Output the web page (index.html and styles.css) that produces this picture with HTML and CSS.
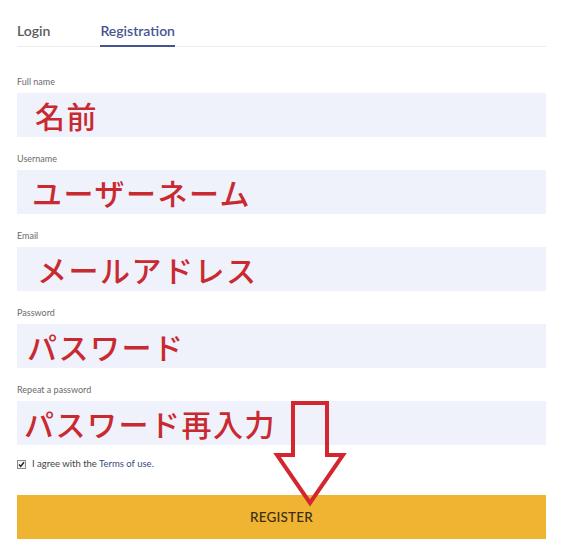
FILE: index.html
```html
<!DOCTYPE html>
<html lang="ja">
<head>
<meta charset="utf-8">
<link rel="stylesheet" href="styles.css">
</head>
<body>
<div class="page">
  <div class="tabs">
    <div class="tab">Login</div>
    <div class="tab active">Registration</div>
  </div>
  <form class="form">
    <div class="field">
      <label class="label">Full name</label>
      <div class="box"><span class="jp pad-name">名前</span></div>
    </div>
    <div class="field">
      <label class="label">Username</label>
      <div class="box"><span class="jp pad-user">ユーザーネーム</span></div>
    </div>
    <div class="field">
      <label class="label">Email</label>
      <div class="box"><span class="jp pad-email">メールアドレス</span></div>
    </div>
    <div class="field">
      <label class="label">Password</label>
      <div class="box"><span class="jp pad-pass">パスワード</span></div>
    </div>
    <div class="field">
      <label class="label">Repeat a password</label>
      <div class="box"><span class="jp pad-repeat">パスワード再入力</span></div>
    </div>
    <div class="agree">
      <span class="check">
        <svg width="9" height="9" viewBox="0 0 9 9"><rect x="0.5" y="0.5" width="8" height="8" fill="#f4f4f4" stroke="#8a8a8a"/><path d="M2 4.6 L3.7 6.4 L7 2.2" fill="none" stroke="#222" stroke-width="1.4"/></svg>
      </span>
      <span>I agree with the <a class="terms">Terms of use</a>.</span>
    </div>
    <div class="button">REGISTER</div>
    <svg class="arrow" width="80" height="112" viewBox="0 0 80 112">
      <path d="M20 4 L54 4 L54 56 L70 56 L37 104 L4 56 L20 56 Z" fill="none" stroke="#d3262e" stroke-width="4" stroke-linejoin="miter"/>
    </svg>
  </form>
</div>
</body>
</html>
```
FILE: styles.css
```css
html, body {
  margin: 0;
  padding: 0;
  background: #ffffff;
}
.page {
  width: 529px;
  padding: 20px 0 0 17px;
  font-family: Lato, "Liberation Sans", sans-serif;
  position: relative;
}
.tabs {
  display: flex;
  gap: 50px;
  border-bottom: 1px solid #ececec;
}
.tab {
  font-size: 14px;
  font-weight: 600;
  color: #5b5b5b;
  line-height: 17px;
  padding: 2px 0 7px;
}
.tab.active {
  color: #45558f;
  border-bottom: 2px solid #45558f;
  margin-bottom: -1px;
  padding-bottom: 6px;
}
.form {
  position: relative;
  padding-top: 29px;
}
.field {
  margin-bottom: 16px;
}
.label {
  display: block;
  font-size: 9px;
  line-height: 12px;
  color: #6b6b6b;
  margin-bottom: 5px;
}
.box {
  height: 44px;
  background: #eff1fb;
  display: flex;
  align-items: center;
}
.jp {
  font-family: "Noto Sans CJK JP", sans-serif;
  font-size: 30px;
  font-weight: 500;
  color: #c92a30;
  line-height: 1;
  letter-spacing: 1.5px;
}
.pad-name { padding-left: 18px; }
.pad-user { padding-left: 15px; }
.pad-email { padding-left: 20px; }
.pad-pass { padding-left: 10px; }
.pad-repeat { padding-left: 7px; }
.agree {
  display: flex;
  align-items: center;
  gap: 6px;
  font-size: 9.5px;
  line-height: 12px;
  color: #444;
  margin-top: -3px;
  height: 12px;
}
.check {
  display: flex;
  width: 9px;
  height: 9px;
}
.terms {
  color: #3b4a86;
}
.button {
  margin-top: 25px;
  height: 44px;
  background: #f0b433;
  color: #3b2e15;
  font-size: 13.5px;
  font-weight: 500;
  display: flex;
  align-items: center;
  justify-content: center;
  letter-spacing: 0.2px;
}
.arrow {
  position: absolute;
  left: 256px;
  top: 352px;
}
```
